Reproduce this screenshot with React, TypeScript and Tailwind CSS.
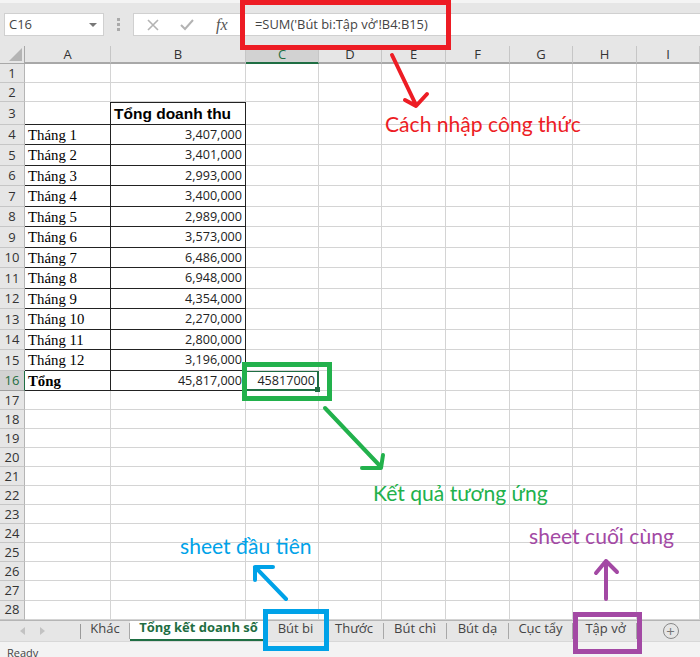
const colWidths = "grid-cols-[25px_86px_135px_73px_63px_64px_64px_63px_64px_63px]";
const columns = ["A", "B", "C", "D", "E", "F", "G", "H", "I"];

const months = [
  ["Tháng 1", "3,407,000"],
  ["Tháng 2", "3,401,000"],
  ["Tháng 3", "2,993,000"],
  ["Tháng 4", "3,400,000"],
  ["Tháng 5", "2,989,000"],
  ["Tháng 6", "3,573,000"],
  ["Tháng 7", "6,486,000"],
  ["Tháng 8", "6,948,000"],
  ["Tháng 9", "4,354,000"],
  ["Tháng 10", "2,270,000"],
  ["Tháng 11", "2,800,000"],
  ["Tháng 12", "3,196,000"],
];

const tabs = [
  { name: "Khác", w: "w-[49px]", pad: "pl-0" },
  { name: "Tổng kết doanh số", w: "w-[133px]", pad: "pl-[4px]", active: true },
  { name: "Bút bi", w: "w-[62px]", pad: "pl-[4px]" },
  { name: "Thước", w: "w-[59px]", pad: "pl-0" },
  { name: "Bút chì", w: "w-[63px]", pad: "pl-0" },
  { name: "Bút dạ", w: "w-[62px]", pad: "pl-0" },
  { name: "Cục tẩy", w: "w-[64px]", pad: "pl-0" },
  { name: "Tập vở", w: "w-[64px]", pad: "pl-[2px]" },
];

const gridLine = "border-r border-b border-[#d4d4d4]";

function RowHead({ n, h, current }: { n: number; h: string; current?: boolean }) {
  return (
    <div
      className={`${h} flex items-center justify-center pt-[1px] border-r border-b text-[13px] ${
        current
          ? "bg-[#d2d2d2] border-r-[#1f6e43] border-b-[#9f9f9f] text-[#1f6e43]"
          : "bg-[#e6e6e6] border-r-[#b5b5b5] border-b-[#c6c6c6] text-[#333]"
      }`}
    >
      {n}
    </div>
  );
}

function EmptyRow({ n, h }: { n: number; h: string }) {
  return (
    <>
      <RowHead n={n} h={h} />
      {columns.map((c) => (
        <div key={c} className={`${h} ${gridLine}`} />
      ))}
    </>
  );
}

function Rest({ h, from }: { h: string; from: number }) {
  return (
    <>
      {columns.slice(from).map((c) => (
        <div key={c} className={`${h} ${gridLine}`} />
      ))}
    </>
  );
}

export default function App() {
  return (
    <div className="relative w-[700px] h-[657px] overflow-hidden bg-white font-['Open_Sans',sans-serif] text-[#222]">
      {/* Formula bar */}
      <div className="h-[46px] bg-[#e6e6e6] border-t-[3px] border-[#f4f4f4] flex items-start pt-[10px] pl-[4px]">
        <div className="w-[100px] h-[23px] bg-white border border-[#d0d0d0] flex items-center justify-between pl-[4px] pr-[6px] text-[13px] text-[#444]">
          C16
          <span className="w-0 h-0 border-x-[4px] border-x-transparent border-t-[4px] border-t-[#777]" />
        </div>
        <div className="w-[29px] h-[23px] flex flex-col items-center justify-center gap-[2px]">
          <span className="w-[3px] h-[3px] bg-[#aaa]" />
          <span className="w-[3px] h-[3px] bg-[#aaa]" />
          <span className="w-[3px] h-[3px] bg-[#aaa]" />
        </div>
        <div className="w-[108px] h-[23px] bg-white border border-[#d0d0d0] flex items-center pl-[13px] gap-[21px]">
          <svg width="12" height="12" viewBox="0 0 12 12" fill="none" stroke="#b3b3b3" strokeWidth="1.6">
            <path d="M1 1l10 10M11 1L1 11" />
          </svg>
          <svg width="14" height="12" viewBox="0 0 14 12" fill="none" stroke="#b3b3b3" strokeWidth="2">
            <path d="M1 6l4 4 8-9" />
          </svg>
          <span className="font-['Liberation_Serif',serif] italic text-[16px] text-[#555] ml-[1px]">fx</span>
        </div>
        <div className="flex-1 h-[23px] bg-white border border-[#d0d0d0] border-r-0 flex items-center pl-[13px] text-[12.9px] text-[#444]">
          =SUM(&apos;Bút bi:Tập vở&apos;!B4:B15)
        </div>
      </div>

      {/* Sheet */}
      <div className={`grid ${colWidths} h-[574px] content-start`}>
        <div className="h-[18px] bg-[#e6e6e6] border-r border-b border-[#a8a8a8] flex items-end justify-end">
          <span className="w-0 h-0 border-l-[13px] border-l-transparent border-b-[13px] border-b-[#b4b4b4] mr-[2px] mb-[2px]" />
        </div>
        {columns.map((c) => (
          <div
            key={c}
            className={`h-[18px] flex items-center justify-center pt-[2px] text-[13px] border-r border-b-2 ${
              c === "C"
                ? "bg-[#d2d2d2] border-r-[#c6c6c6] border-b-[#1f6e43] text-[#1f6e43]"
                : "bg-[#e6e6e6] border-r-[#c6c6c6] border-b-[#a8a8a8] text-[#333]"
            }`}
          >
            {c}
          </div>
        ))}

        <EmptyRow n={1} h="h-[19px]" />
        <EmptyRow n={2} h="h-[19px]" />

        <RowHead n={3} h="h-[22.5px]" />
        <div className="h-[22.5px] border-b border-r border-[#222] " />
        <div className="h-[22.5px] border border-l-0 border-[#222] flex items-center pl-[3px] font-['Liberation_Sans',sans-serif] font-bold text-[15.5px] text-black">
          Tổng doanh thu
        </div>
        <Rest h="h-[22.5px]" from={2} />

        {months.map(([m, v], i) => (
          <div key={m} className="contents">
            <RowHead n={i + 4} h="h-[20.5px]" />
            <div className="h-[20.5px] border-b border-r border-[#222] flex items-center pl-[3px] pt-[1px] font-['Liberation_Serif',serif] text-[14.8px] text-black">
              {m}
            </div>
            <div className="h-[20.5px] border-b border-r border-[#222] flex items-center justify-end pr-[3px] pt-[2px] text-[12.6px] text-[#222]">
              {v}
            </div>
            <Rest h="h-[20.5px]" from={2} />
          </div>
        ))}

        <RowHead n={16} h="h-[20.5px]" current />
        <div className="h-[20.5px] border-b border-r border-[#222] flex items-center pl-[3px] pt-[1px] font-['Liberation_Serif',serif] font-bold text-[14.8px] text-black">
          Tổng
        </div>
        <div className="h-[20.5px] border-b border-r border-[#222] flex items-center justify-end pr-[3px] pt-[2px] text-[12.6px] text-[#222]">
          45,817,000
        </div>
        <div className="relative h-[20.5px] border-r-2 border-b-2 border-t border-[#1f6e43] flex items-center justify-end pr-[2px] pt-[2px] text-[12.6px] text-[#222]">
          45817000
          <span className="absolute -right-[3px] -bottom-[3px] w-[5px] h-[5px] bg-[#1f6e43]" />
        </div>
        <Rest h="h-[20.5px]" from={3} />

        {Array.from({ length: 12 }, (_, i) => (
          <EmptyRow key={i} n={i + 17} h="h-[19.05px]" />
        ))}
      </div>

      {/* Sheet tabs */}
      <div className="h-[22px] bg-[#e6e6e6] border-t border-b border-t-[#b5b5b5] border-b-[#d8d8d8] flex items-stretch">
        <div className="w-[81px] flex items-center pl-[20px] gap-[15px] relative">
          <span className="w-0 h-0 border-y-[4px] border-y-transparent border-r-[5px] border-r-[#c2c2c2]" />
          <span className="w-0 h-0 border-y-[4px] border-y-transparent border-l-[5px] border-l-[#c2c2c2]" />
          <span className="absolute right-0 top-[3px] bottom-[2px] w-px bg-[#9a9a9a]" />
        </div>
        {tabs.map((t) => (
          <div
            key={t.name}
            className={`${t.w} ${t.pad} flex items-center justify-center text-[13px] pb-[4px] ${
              t.active
                ? "bg-white border-b-2 border-[#1f6e43] font-bold text-[#1f6e43]"
                : "border-r border-[#a8a8a8] my-[2px] text-[#444]"
            }`}
          >
            {t.name}
          </div>
        ))}
        <div className="flex-1 flex items-center justify-center pl-[4px]">
          <span className="w-[16px] h-[16px] rounded-full border border-[#888] flex items-center justify-center text-[15px] leading-none text-[#777]">
            +
          </span>
        </div>
      </div>

      {/* Status bar */}
      <div className="h-[15px] bg-[#f3f3f3] pl-[7px] text-[11px] leading-[22px] text-[#444] overflow-hidden">Ready</div>

      {/* Annotations */}
      <div className="absolute left-[240px] top-0 w-[211px] h-[50px] border-[5px] border-[#ed1c24]" />
      <div className="absolute left-[242px] top-[362px] w-[90px] h-[39px] border-[5px] border-[#22b14c]" />
      <div className="absolute left-[263px] top-[609px] w-[66px] h-[42px] border-[5px] border-[#00a2e8]" />
      <div className="absolute left-[573px] top-[612px] w-[69px] h-[42px] border-[5px] border-[#a349a4]" />

      <svg className="absolute inset-0 pointer-events-none" width="700" height="657" fill="none" strokeWidth="4" strokeLinecap="round" strokeLinejoin="round">
        <path d="M392 55L416 105M405 100l11 6 11-12" stroke="#ed1c24" />
        <path d="M325 408L381 467M362 468l19 0 2-13" stroke="#22b14c" />
        <path d="M286 599L255 567M255 580v-13h18" stroke="#00a2e8" />
        <path d="M606 599V561M596 573l10-12 11 11" stroke="#a349a4" />
      </svg>

      <div className="absolute left-[385px] top-[109px] font-['Lato',sans-serif] text-[21.1px] leading-[30px] text-[#ed1c24]">Cách nhập công thức</div>
      <div className="absolute left-[373px] top-[478px] font-['Lato',sans-serif] text-[21.1px] leading-[30px] text-[#22b14c]">Kết quả tương ứng</div>
      <div className="absolute left-[180px] top-[531px] font-['Lato',sans-serif] text-[21.1px] leading-[30px] text-[#00a2e8]">sheet đầu tiên</div>
      <div className="absolute left-[529px] top-[521px] font-['Lato',sans-serif] text-[21.1px] leading-[30px] text-[#a349a4]">sheet cuối cùng</div>
    </div>
  );
}
